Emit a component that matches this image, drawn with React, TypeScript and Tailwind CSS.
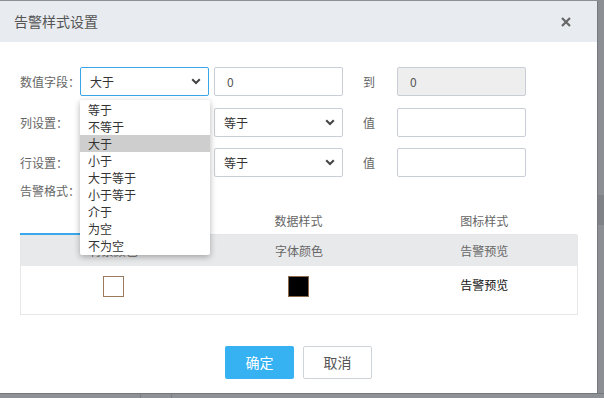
// 告警样式设置 弹窗 — 下拉列表展开状态

const OPTIONS = ['等于', '不等于', '大于', '小于', '大于等于', '小于等于', '介于', '为空', '不为空'];

function Chevron() {
  return (
    <svg width="10" height="7" viewBox="0 0 10 7" className="shrink-0">
      <path d="M1.2 1.2 L5 5 L8.8 1.2" fill="none" stroke="#444" strokeWidth="2" />
    </svg>
  );
}

function SelectBox({ value, focused }: { value: string; focused?: boolean }) {
  return (
    <div
      className={`flex h-[29px] w-[129px] items-center justify-between rounded-[2px] border bg-white pl-[9px] pr-[7px] text-[12px] text-[#333] ${
        focused ? 'border-[#3aa5e8]' : 'border-[#c9ced6]'
      }`}
    >
      <span>{value}</span>
      <Chevron />
    </div>
  );
}

function TextBox({ value, disabled }: { value?: string; disabled?: boolean }) {
  return (
    <div
      className={`flex h-[29px] w-[129px] items-center rounded-[2px] border border-[#c9ced6] pl-[12px] text-[12px] text-[#555] ${
        disabled ? 'bg-[#eeeeee]' : 'bg-white'
      }`}
    >
      {value}
    </div>
  );
}

function FieldRow({ label, first, second, mid, third }: { label: string; first: React.ReactNode; second: React.ReactNode; mid: string; third: React.ReactNode }) {
  return (
    <div className="flex items-center">
      <div className="w-[60px] text-[12px] text-[#666]">{label}</div>
      {first}
      <div className="ml-[5px]">{second}</div>
      <div className="w-[54px] pl-[20px] text-[12px] text-[#666]">{mid}</div>
      {third}
    </div>
  );
}

export default function App() {
  return (
    <div
      className="relative h-[398px] w-[604px] overflow-hidden bg-[#8c9094]"
      style={{ fontFamily: '"Noto Sans CJK SC", "Noto Sans", sans-serif' }}
    >
      {/* 背景页面残影 */}
      <div className="absolute right-0 top-[195px] h-[30px] w-[6px] bg-[#7f8387]" />
      <div className="absolute bottom-0 left-0 h-[5px] w-full border-t border-[#74787c] bg-[#8e9296]">
        <div className="absolute left-[140px] top-0 h-full w-px bg-[#7a7e82]" />
        <div className="absolute left-[171px] top-0 h-full w-px bg-[#7a7e82]" />
      </div>

      <div className="relative mt-px h-[392px] w-[598px] border-r border-[#75797d] bg-white">
        {/* 标题栏 */}
        <div className="flex h-[41px] items-center justify-between bg-[#e8ebef] pl-[14px] pr-[26px]">
          <span className="text-[14px] text-[#555]">告警样式设置</span>
          <svg width="10" height="10" viewBox="0 0 10 10">
            <path d="M1 1 L9 9 M9 1 L1 9" stroke="#666" strokeWidth="2.2" />
          </svg>
        </div>

        <div className="px-[20px] pt-[25px]">
          <FieldRow
            label="数值字段："
            first={<SelectBox value="大于" focused />}
            second={<TextBox value="0" />}
            mid="到"
            third={<TextBox value="0" disabled />}
          />
          <div className="mt-[12px]">
            <FieldRow
              label="列设置："
              first={<SelectBox value="" />}
              second={<SelectBox value="等于" />}
              mid="值"
              third={<TextBox />}
            />
          </div>
          <div className="mt-[11px]">
            <FieldRow
              label="行设置："
              first={<SelectBox value="" />}
              second={<SelectBox value="等于" />}
              mid="值"
              third={<TextBox />}
            />
          </div>
          <div className="mt-[6px] text-[12px] leading-[16px] text-[#666]">告警格式：</div>

          {/* 页签 */}
          <div className="mt-[8px] grid h-[28px] grid-cols-3 border-b border-[#e3e5e8] text-[12px] text-[#666]">
            <div className="-mb-px flex items-center justify-center border-b-2 border-[#3aa8ec]">背景样式</div>
            <div className="flex items-center justify-center">数据样式</div>
            <div className="flex items-center justify-center">图标样式</div>
          </div>

          {/* 表格 */}
          <div className="w-[558px] border border-t-0 border-[#e6e7e9] text-[12px]">
            <div className="grid h-[31px] grid-cols-3 bg-[#e8e9eb] text-[#666]">
              <div className="flex items-center justify-center">背景颜色</div>
              <div className="flex items-center justify-center">字体颜色</div>
              <div className="flex items-center justify-center">告警预览</div>
            </div>
            <div className="grid h-[48px] grid-cols-3 bg-white">
              <div className="flex justify-center pt-[10px]">
                <div className="h-[21px] w-[21px] border border-[#9a7a5a] bg-white" />
              </div>
              <div className="flex justify-center pt-[10px]">
                <div className="h-[21px] w-[21px] border border-[#8a6a4a] bg-black" />
              </div>
              <div className="flex justify-center pt-[10px] text-[#111]">告警预览</div>
            </div>
          </div>

          {/* 按钮 */}
          <div className="mt-[31px] flex justify-center gap-[9px]">
            <button className="h-[33px] w-[69px] rounded-[2px] bg-[#36b2f3] text-[14px] text-white">确定</button>
            <button className="h-[33px] w-[69px] rounded-[2px] border border-[#cfd4da] bg-white text-[14px] text-[#555]">取消</button>
          </div>
        </div>

        {/* 展开的下拉列表 */}
        <div className="absolute left-[80px] top-[99px] w-[130px] rounded-[2px] bg-white py-px shadow-[0_2px_6px_rgba(0,0,0,0.3)]">
          {OPTIONS.map((o) => (
            <div
              key={o}
              className={`flex h-[17px] items-center pl-[8px] text-[12px] text-[#333] ${o === '大于' ? 'bg-[#cecece]' : ''}`}
            >
              {o}
            </div>
          ))}
        </div>
      </div>
    </div>
  );
}
